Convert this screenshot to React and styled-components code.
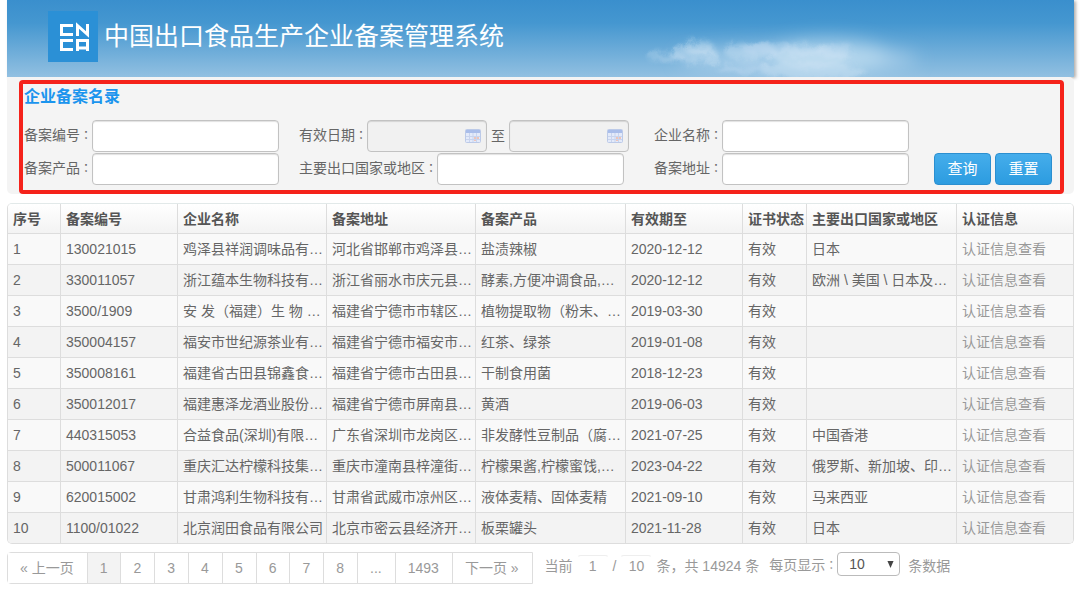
import { useState } from 'react';
import styled, { createGlobalStyle } from 'styled-components';

const columns = [
  { title: '序号', width: 53 },
  { title: '备案编号', width: 117 },
  { title: '企业名称', width: 149 },
  { title: '备案地址', width: 149 },
  { title: '备案产品', width: 150 },
  { title: '有效期至', width: 117 },
  { title: '证书状态', width: 64 },
  { title: '主要出口国家或地区', width: 150 },
  { title: '认证信息', width: 116 },
];

const rows = [
  ['130021015', '鸡泽县祥润调味品有…', '河北省邯郸市鸡泽县…', '盐渍辣椒', '2020-12-12', '有效', '日本'],
  ['330011057', '浙江蕴本生物科技有…', '浙江省丽水市庆元县…', '酵素,方便冲调食品,…', '2020-12-12', '有效', '欧洲 \\ 美国 \\ 日本及…'],
  ['3500/1909', '安 发（福建）生 物 …', '福建省宁德市市辖区…', '植物提取物（粉末、…', '2019-03-30', '有效', ''],
  ['350004157', '福安市世纪源茶业有…', '福建省宁德市福安市…', '红茶、绿茶', '2019-01-08', '有效', ''],
  ['350008161', '福建省古田县锦鑫食…', '福建省宁德市古田县…', '干制食用菌', '2018-12-23', '有效', ''],
  ['350012017', '福建惠泽龙酒业股份…', '福建省宁德市屏南县…', '黄酒', '2019-06-03', '有效', ''],
  ['440315053', '合益食品(深圳)有限…', '广东省深圳市龙岗区…', '非发酵性豆制品（腐…', '2021-07-25', '有效', '中国香港'],
  ['500011067', '重庆汇达柠檬科技集…', '重庆市潼南县梓潼街…', '柠檬果酱,柠檬蜜饯,…', '2023-04-22', '有效', '俄罗斯、新加坡、印…'],
  ['620015002', '甘肃鸿利生物科技有…', '甘肃省武威市凉州区…', '液体麦精、固体麦精', '2021-09-10', '有效', '马来西亚'],
  ['1100/01022', '北京润田食品有限公司', '北京市密云县经济开…', '板栗罐头', '2021-11-28', '有效', '日本'],
];

const pages = ['« 上一页', '1', '2', '3', '4', '5', '6', '7', '8', '...', '1493', '下一页 »'];

const emptyForm = { number: '', company: '', product: '', country: '', address: '' };

const Logo = () => (
  <svg width="50" height="51" viewBox="0 0 50 51" aria-label="CNCA">
    <rect width="50" height="51" fill="#2b90d6" />
    <g fill="none" stroke="#fff" strokeWidth="3">
      <path d="M25 14.500H13.500V23.500H25" />
      <path d="M29.500 25V14.500L39.500 23.500V13" />
      <path d="M25 29.500H13.500V38.500H25" />
      <path d="M29.500 40V29.500H39.500V40M29 37H40" />
    </g>
  </svg>
);

const Clouds = () => (
  <svg width="320" height="66" viewBox="0 0 320 66" aria-hidden="true">
    <defs>
      <filter id="haze" x="-20%" y="-60%" width="140%" height="220%">
        <feGaussianBlur stdDeviation="9" />
      </filter>
      <filter id="puff" x="-20%" y="-40%" width="140%" height="180%">
        <feGaussianBlur stdDeviation="2" result="soft" />
        <feTurbulence type="fractalNoise" baseFrequency="0.06" numOctaves="4" seed="8" result="noise" />
        <feDisplacementMap in="soft" in2="noise" scale="14" />
      </filter>
    </defs>
    <g fill="#cfe6f6" filter="url(#haze)">
      <ellipse cx="175" cy="48" rx="120" ry="13" opacity="0.5" />
      <ellipse cx="205" cy="45" rx="60" ry="18" opacity="0.45" />
    </g>
    <g fill="#d6e9f6" filter="url(#puff)">
      <ellipse cx="72" cy="44" rx="24" ry="8" opacity="0.35" />
      <ellipse cx="76" cy="37" rx="16" ry="7" opacity="0.4" />
      <ellipse cx="44" cy="46" rx="20" ry="4" opacity="0.3" />
      <ellipse cx="128" cy="41" rx="26" ry="9" opacity="0.35" />
      <ellipse cx="160" cy="38" rx="42" ry="7" opacity="0.25" />
      <ellipse cx="188" cy="46" rx="36" ry="11" opacity="0.3" />
      <ellipse cx="190" cy="60" rx="52" ry="8" opacity="0.35" />
      <ellipse cx="212" cy="39" rx="20" ry="6" opacity="0.25" />
      <ellipse cx="120" cy="57" rx="28" ry="4" opacity="0.25" />
    </g>
  </svg>
);

const CalendarIcon = () => (
  <svg width="16" height="14" viewBox="0 0 16 14" aria-hidden="true">
    <rect x="0.5" y="0.5" width="15" height="13" rx="1" fill="#e3eafa" stroke="#bccae8" />
    <rect x="1" y="1" width="14" height="3" fill="#a9bdea" />
    <path d="M1 7.500H15M1 10.500H15M4.500 4V13M8 4V13M11.500 4V13" stroke="#c9d4ee" />
    <path d="M9 8h2v2h-2zM12 8h2v2h-2zM9 11h2v1h-2z" fill="#eec4b8" />
  </svg>
);

const Field = ({ label, id, children }) => (
  <FieldBox>
    <Label htmlFor={id}>
      {label}
      <Colon>：</Colon>
    </Label>
    {children}
  </FieldBox>
);

const App = () => {
  const [form, setForm] = useState(emptyForm);
  const [pageSize, setPageSize] = useState('10');

  const handleChange = (e) => {
    const { name, value } = e.target;
    setForm((prev) => ({ ...prev, [name]: value }));
  };

  const textBox = (name) => (
    <TextInput id={name} name={name} type="text" value={form[name]} onChange={handleChange} />
  );

  return (
    <Page>
      <GlobalStyle />
      <Banner>
        <Brand>
          <Logo />
          <SystemName>中国出口食品生产企业备案管理系统</SystemName>
        </Brand>
        <Sky>
          <Clouds />
        </Sky>
      </Banner>

      <Panel>
        <SearchForm onSubmit={(e) => e.preventDefault()}>
          <FormTitle>企业备案名录</FormTitle>
          <FormGrid>
            <Field label="备案编号" id="number">{textBox('number')}</Field>
            <FieldBox>
              <Label htmlFor="dateFrom">
                有效日期
                <Colon>：</Colon>
              </Label>
              <DateBox>
                <DateInput id="dateFrom" type="text" readOnly />
                <CalendarIcon />
              </DateBox>
              <RangeWord htmlFor="dateTo">至</RangeWord>
              <DateBox>
                <DateInput id="dateTo" type="text" readOnly />
                <CalendarIcon />
              </DateBox>
            </FieldBox>
            <Field label="企业名称" id="company">{textBox('company')}</Field>
            <span />
            <Field label="备案产品" id="product">{textBox('product')}</Field>
            <Field label="主要出口国家或地区" id="country">{textBox('country')}</Field>
            <Field label="备案地址" id="address">{textBox('address')}</Field>
            <Actions>
              <Button type="submit">查询</Button>
              <Button type="button" onClick={() => setForm(emptyForm)}>重置</Button>
            </Actions>
          </FormGrid>
        </SearchForm>
      </Panel>

      <Table>
        <colgroup>
          {columns.map((col) => (
            <col key={col.title} width={col.width} />
          ))}
        </colgroup>
        <thead>
          <tr>
            {columns.map((col) => (
              <th key={col.title}>{col.title}</th>
            ))}
          </tr>
        </thead>
        <tbody>
          {rows.map((row, i) => (
            <tr key={row[0]}>
              <td>{i + 1}</td>
              {row.map((cell, j) => (
                <td key={j}>{cell}</td>
              ))}
              <td>
                <a href="#info">认证信息查看</a>
              </td>
            </tr>
          ))}
        </tbody>
      </Table>

      <Footer>
        <Pager>
          {pages.map((page) => (
            <PageLink key={page} href="#page" $active={page === '1'}>
              {page}
            </PageLink>
          ))}
        </Pager>
        <Summary>
          <label htmlFor="current">当前</label>
          <SmallInput id="current" type="text" defaultValue="1" />
          <span>/</span>
          <SmallInput aria-label="每页条数" type="text" defaultValue="10" />
          <span>条，共 14924 条</span>
        </Summary>
        <PageSize>
          <Label htmlFor="pageSize">
            每页显示
            <Colon>：</Colon>
          </Label>
          <SelectBox>
            <Select id="pageSize" value={pageSize} onChange={(e) => setPageSize(e.target.value)}>
              <option>10</option>
              <option>20</option>
              <option>50</option>
            </Select>
            <Arrow viewBox="0 0 8 8" aria-hidden="true">
              <path d="M0.500 0H7.500L4 8Z" fill="#444" />
            </Arrow>
          </SelectBox>
          <Unit>条数据</Unit>
        </PageSize>
      </Footer>
    </Page>
  );
};

const GlobalStyle = createGlobalStyle`
  * {
    box-sizing: border-box;
  }

  body {
    margin: 0;
    background: #fff;
    color: #666;
    font-family: 'Liberation Sans', 'Noto Sans CJK SC', sans-serif;
    font-size: 14px;
  }

  input, button, select {
    font-family: inherit;
    font-size: 14px;
  }
`;

const Page = styled.div`
  padding: 0 6px 0 7px;
`;

const Banner = styled.header`
  display: flex;
  align-items: stretch;
  height: 77px;
  padding-left: 41px;
  background: linear-gradient(#3a8fcd, #4597d0 30%, #92c0e1);
  box-shadow: 2px 1px 3px rgba(90, 80, 70, 0.45);
`;

const Brand = styled.div`
  display: flex;
  align-items: center;
  gap: 6px;
  padding-bottom: 4px;
`;

const SystemName = styled.h1`
  margin: 0;
  padding-bottom: 2px;
  color: #fff;
  font-size: 25px;
  font-weight: 400;
  line-height: 34px;
  white-space: nowrap;
`;

const Sky = styled.div`
  display: flex;
  flex: 1;
  align-items: flex-end;
  padding-left: 119px;
  overflow: hidden;

  svg {
    flex: none;
  }
`;

const Panel = styled.section`
  position: relative;
  margin-bottom: 9px;
  padding: 3px 10px 0 12px;
  background: #f4f4f4;
  border-radius: 0 5px 5px 5px;
`;

const SearchForm = styled.form`
  padding: 0 1px 5px;
  border: 4px solid #f5231b;
  border-radius: 4px;
`;

const FormTitle = styled.h2`
  margin: 0 0 10px;
  color: #1b95ee;
  font-size: 16px;
  font-weight: 700;
  line-height: 26px;
`;

const FormGrid = styled.div`
  display: grid;
  grid-template-columns: 275fr 355fr 280fr 125fr;
  row-gap: 1px;
`;

const FieldBox = styled.div`
  display: flex;
  align-items: center;
`;

const Label = styled.label`
  display: flex;
  flex: none;
  line-height: 20px;
  padding-bottom: 2px;
`;

const Colon = styled.span`
  width: 12px;
  font-family: 'Noto Sans CJK TC', sans-serif;
  font-size: 12px;
`;

const TextInput = styled.input`
  width: 187px;
  height: 32px;
  padding: 0 8px;
  border: 1px solid #c2c2c2;
  border-radius: 4px;
  background: #fff;
  color: #555;
  box-shadow: inset 0 1px 1px rgba(0, 0, 0, 0.12);
`;

const DateBox = styled.div`
  display: flex;
  align-items: center;
  width: 120px;
  height: 32px;
  padding-right: 5px;
  border: 1px solid #c2c2c2;
  border-radius: 4px;
  background: #f1f1f1;
  box-shadow: inset 0 1px 1px rgba(0, 0, 0, 0.12);
`;

const DateInput = styled.input`
  flex: 1;
  min-width: 0;
  border: none;
  background: transparent;
  outline: none;
`;

const RangeWord = styled.label`
  width: 22px;
  padding-bottom: 2px;
  text-align: center;
`;

const Actions = styled.div`
  display: flex;
  gap: 4px;
`;

const Button = styled.button`
  width: 57px;
  height: 32px;
  padding: 0;
  border: 1px solid #2b8fd0;
  border-radius: 4px;
  background: linear-gradient(#45adeb, #2c9ce0);
  color: #fff;
  font-size: 15px;
  line-height: 20px;
  cursor: pointer;
`;

const Table = styled.table`
  width: 100%;
  table-layout: fixed;
  border-collapse: separate;
  border-spacing: 0;
  border: 1px solid #ddd;
  border-top-color: #e2e9e9;
  border-radius: 5px;
  overflow: hidden;

  th,
  td {
    height: 31px;
    padding: 0 2px 0 5px;
    border-right: 1px solid #ddd;
    border-bottom: 1px solid #ddd;
    line-height: 20px;
    text-align: left;
    white-space: nowrap;
    overflow: hidden;
  }

  th {
    height: 30px;
    background: linear-gradient(#fff, #f3f3f3);
    color: #555;
    font-weight: 700;
  }

  th:last-child,
  td:last-child {
    border-right: none;
  }

  tbody tr {
    background: #f9f9f9;
  }

  tbody tr:nth-child(even) {
    background: #f3f3f3;
  }

  tbody tr:last-child td {
    height: 30px;
    border-bottom: none;
  }

  a {
    color: #999;
    text-decoration: none;
  }
`;

const Footer = styled.footer`
  display: flex;
  align-items: flex-start;
  margin-top: 8px;
  color: #999;
  line-height: 20px;
  white-space: nowrap;
`;

const Pager = styled.nav`
  display: flex;
  border: 1px solid #ddd;
  border-radius: 4px 0 0 4px;
`;

const PageLink = styled.a`
  height: 30px;
  padding: 0 13px 0 12px;
  border-right: 1px solid #ddd;
  background: ${(props) => (props.$active ? '#f3f3f3' : '#fff')};
  color: #999;
  line-height: 30px;
  text-decoration: none;

  &:last-child {
    border-right: none;
  }
`;

const Summary = styled.div`
  display: flex;
  align-items: center;
  gap: 4px;
  height: 28px;
  margin-left: 12px;
`;

const SmallInput = styled.input`
  width: 32px;
  height: 22px;
  padding: 0;
  border: 1px solid transparent;
  border-top-color: #eee;
  border-radius: 4px;
  background: #fff;
  color: #999;
  text-align: center;
`;

const PageSize = styled.div`
  display: flex;
  align-items: center;
  margin-left: 10px;
  height: 28px;
`;

const SelectBox = styled.div`
  display: grid;
  align-items: center;
  align-self: flex-start;
`;

const Select = styled.select`
  grid-area: 1 / 1;
  width: 63px;
  height: 24px;
  padding: 0 11px;
  border: 1px solid #bbb;
  border-radius: 4px;
  background: #fff;
  color: #555;
  appearance: none;
`;

const Arrow = styled.svg`
  grid-area: 1 / 1;
  justify-self: end;
  width: 7px;
  height: 7px;
  margin-right: 6px;
  pointer-events: none;
`;

const Unit = styled.span`
  margin-left: 8px;
`;

export default App;
